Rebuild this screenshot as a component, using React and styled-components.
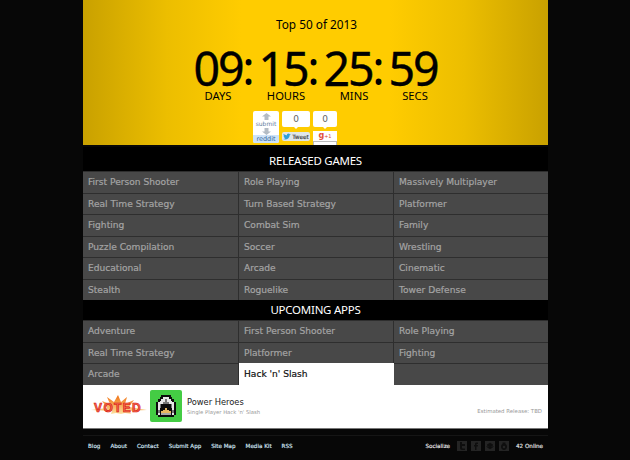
import styled, { createGlobalStyle } from "styled-components";

const releasedGames = [
  "First Person Shooter", "Role Playing", "Massively Multiplayer",
  "Real Time Strategy", "Turn Based Strategy", "Platformer",
  "Fighting", "Combat Sim", "Family",
  "Puzzle Compilation", "Soccer", "Wrestling",
  "Educational", "Arcade", "Cinematic",
  "Stealth", "Roguelike", "Tower Defense",
];

const upcomingApps = [
  "Adventure", "First Person Shooter", "Role Playing",
  "Real Time Strategy", "Platformer", "Fighting",
  "Arcade", "Hack 'n' Slash", "",
];

const countdown = [
  { value: "09", label: "DAYS" },
  { value: "15", label: "HOURS" },
  { value: "25", label: "MINS" },
  { value: "59", label: "SECS" },
];

const footerLinks = ["Blog", "About", "Contact", "Submit App", "Site Map", "Media Kit", "RSS"];

const sprite = [
  "...#####...",
  "..##www##..",
  ".##wwkww##.",
  ".#wwwkwww#.",
  "#wwwkkkwww#",
  "#wk#####kw#",
  "#wk#####kw#",
  "#w###o###w#",
  "#k##ooo##k#",
  "#k#ooooo#k#",
  "#w#aaaaa#w#",
  ".#########.",
];

const spriteColors = { "#": "#0c0c0c", w: "#e8e8e8", k: "#777", o: "#e8b860", a: "#a8a8a8" };

export default function App() {
  return (
    <>
      <GlobalStyle />
      <Page>
        <Hero>
          <HeroTitle>Top 50 of 2013</HeroTitle>
          <Clock>
            {countdown.map((unit, i) => (
              <ClockGroup key={unit.label}>
                <ClockDigits>{unit.value}</ClockDigits>
                {i < 3 && <Colon>:</Colon>}
              </ClockGroup>
            ))}
          </Clock>
          <ClockLabels>
            {countdown.map((unit) => (
              <ClockLabel key={unit.label}>{unit.label}</ClockLabel>
            ))}
          </ClockLabels>
          <ShareRow>
            <RedditBox>
              <Arrow>
                <svg width="9" height="7" viewBox="0 0 9 7"><path d="M4.500 0 9 3.500H6.500V7h-4V3.500H0z" fill="#b4bcc4" /></svg>
              </Arrow>
              <RedditSubmit>submit</RedditSubmit>
              <Arrow>
                <svg width="9" height="7" viewBox="0 0 9 7"><path d="M4.500 7 9 3.500H6.500V0h-4v3.500H0z" fill="#b4bcc4" /></svg>
              </Arrow>
              <RedditName>reddit</RedditName>
            </RedditBox>
            <TweetColumn>
              <Bubble>0</Bubble>
              <TweetButton>
                <svg width="8" height="7" viewBox="0 0 10 8"><path d="M0 7c3 1.500 8 .5 8.500-5L10 1 8.500 1.200C8 0 6 -.3 5.200 1 4.800 1.600 5 2 5 2.500 3.500 2.500 2 1.800 .8 .6 .3 1.800.8 2.800 1.500 3.300L.6 3.100C.7 4 1.300 4.700 2.200 5 1.900 5.100 1.500 5.100 1.200 5 1.500 5.700 2.200 6.200 3 6.200 2.200 6.800 1 7.100 0 7z" fill="#2c9fd8" /></svg>
                Tweet
              </TweetButton>
            </TweetColumn>
            <PlusColumn>
              <Bubble>0</Bubble>
              <PlusButton>
                <PlusG>g</PlusG>+1
              </PlusButton>
              <CutOffBox />
            </PlusColumn>
          </ShareRow>
        </Hero>

        <SectionTitle>RELEASED GAMES</SectionTitle>
        <CategoryGrid>
          {releasedGames.map((name) => (
            <Category key={name}>{name}</Category>
          ))}
        </CategoryGrid>

        <SectionTitle $compact>UPCOMING APPS</SectionTitle>
        <CategoryGrid>
          {upcomingApps.map((name, i) => (
            <Category key={i} $active={name === "Hack 'n' Slash"}>
              {name}
            </Category>
          ))}
        </CategoryGrid>

        <FeaturePanel>
          <VotedBadge>
            <svg width="56" height="22" viewBox="0 0 56 22">
              <defs>
                <linearGradient id="burst" x1="0" y1="0" x2="0" y2="1">
                  <stop offset="0" stopColor="#f07010" />
                  <stop offset="1" stopColor="#fce0a0" />
                </linearGradient>
              </defs>
              <path
                d="M27 0l3 7 6-5-2 7 9-4-5 7 18 3-17 1 1 3-6-1-4 1-5-1-5 1 1-3L0 15l16-2-5-7 8 3-3-7 7 5z"
                fill="url(#burst)"
              />
            </svg>
            <VotedText>VOTED</VotedText>
          </VotedBadge>
          <AppIcon>
            <svg width="20" height="22" viewBox="0 0 11 12" shapeRendering="crispEdges">
              {sprite.flatMap((line, y) =>
                [...line].map((c, x) =>
                  c === "." ? null : (
                    <rect key={`${x}-${y}`} x={x} y={y} width="1" height="1" fill={spriteColors[c]} />
                  )
                )
              )}
            </svg>
          </AppIcon>
          <AppInfo>
            <AppName>Power Heroes</AppName>
            <AppGenre>Single Player Hack 'n' Slash</AppGenre>
          </AppInfo>
          <ReleaseDate>Estimated Release: TBD</ReleaseDate>
        </FeaturePanel>

        <Footer>
          <FooterLinks>
            {footerLinks.map((link) => (
              <FooterLink key={link}>{link}</FooterLink>
            ))}
          </FooterLinks>
          <FooterRight>
            <FooterText>Socialize</FooterText>
            <SocialIcons>
              <SocialIcon>
                <svg width="10" height="10" viewBox="0 0 10 10"><path d="M3 1h2v2h3v2H5v1.500c0 .6.500 1 1 1h2V9H5C3.800 9 3 8.200 3 7z" fill="#0e0e0e" /></svg>
              </SocialIcon>
              <SocialIcon>
                <svg width="10" height="10" viewBox="0 0 10 10"><path d="M4 9V5.500H3V4h1V3c0-1 .600-1.500 1.500-1.500H7V3H6c-.3 0-.5.200-.5.500V4H7l-.2 1.500H5.500V9z" fill="#0e0e0e" /></svg>
              </SocialIcon>
              <SocialIcon>
                <svg width="10" height="10" viewBox="0 0 10 10"><path d="M5 2 8 4 5 6 2 4zM1.500 5.500 5 8l3.500-2.500" fill="#0e0e0e" stroke="#0e0e0e" strokeWidth=".6" /></svg>
              </SocialIcon>
              <SocialIcon>
                <svg width="10" height="10" viewBox="0 0 10 10"><path d="M3.500 1.500h3V3c1 .5 1.500 1.500 1.500 2.500C8 7.500 6.700 9 5 9S2 7.500 2 5.500C2 4.500 2.500 3.500 3.500 3z" fill="#0e0e0e" /><circle cx="5" cy="6" r="1.300" fill="#242424" /></svg>
              </SocialIcon>
            </SocialIcons>
            <OnlineCount>42 Online</OnlineCount>
          </FooterRight>
        </Footer>
      </Page>
    </>
  );
}

const GlobalStyle = createGlobalStyle`
  html, body {
    margin: 0;
    padding: 0;
    background: #070707;
    height: 100%;
    overflow: hidden;
  }
`;

const Page = styled.div`
  width: 465px;
  margin-left: 83px;
  font-family: "DejaVu Sans", sans-serif;
`;

const Hero = styled.div`
  height: 145px;
  overflow: hidden;
  display: flex;
  flex-direction: column;
  align-items: center;
  background: linear-gradient(90deg, #c9a100 0%, #ecbe00 18%, #ffcc00 34%, #ffcc00 66%, #ecbe00 82%, #c9a100 100%);
  font-family: "Noto Sans", sans-serif;
  color: #000;
`;

const HeroTitle = styled.div`
  margin-top: 15px;
  padding-left: 2px;
  font-size: 11.8px;
  line-height: 18px;
`;

const Clock = styled.div`
  display: flex;
  margin-top: 11px;
  margin-right: 4px;
  height: 45px;
`;

const ClockGroup = styled.div`
  display: flex;
`;

const ClockDigits = styled.div`
  width: 45px;
  text-align: center;
  font-size: 46.5px;
  line-height: 48px;
  letter-spacing: -2px;
  -webkit-text-stroke: 0.4px;
  white-space: nowrap;
`;

const Colon = styled.div`
  width: 20px;
  text-align: center;
  font-size: 46.5px;
  line-height: 46px;
`;

const ClockLabels = styled.div`
  display: grid;
  grid-template-columns: 68px 68px 68px 54px;
  margin-right: 5px;
`;

const ClockLabel = styled.div`
  text-align: center;
  font-size: 11.2px;
  line-height: 14px;
`;

const ShareRow = styled.div`
  display: flex;
  gap: 3px;
  margin-top: 8px;
  margin-left: 170px;
  align-self: flex-start;
  font-family: "DejaVu Sans", sans-serif;
`;

const RedditBox = styled.div`
  box-sizing: border-box;
  width: 26px;
  height: 32px;
  padding-top: 2px;
  overflow: hidden;
  background: #fff;
  border-radius: 2px;
  display: flex;
  flex-direction: column;
  align-items: center;
`;

const Arrow = styled.div`
  height: 7px;
  display: flex;
`;

const RedditSubmit = styled.div`
  font-size: 6px;
  line-height: 8px;
  color: #5f7d9d;
`;

const RedditName = styled.div`
  width: 100%;
  margin-top: auto;
  text-align: center;
  font-size: 6.5px;
  line-height: 8px;
  color: #369;
  background: #cee3f8;
`;

const TweetColumn = styled.div`
  width: 28px;
  display: flex;
  flex-direction: column;
  gap: 5px;
`;

const PlusColumn = styled(TweetColumn)`
  width: 24px;
  gap: 5px;
`;

const Bubble = styled.div`
  position: relative;
  height: 16px;
  background: #fff;
  border-radius: 2px;
  text-align: center;
  font-size: 9px;
  line-height: 16px;
  color: #666;
  &::after {
    content: "";
    position: absolute;
    left: 50%;
    bottom: -2px;
    margin-left: -2px;
    border-left: 2px solid transparent;
    border-right: 2px solid transparent;
    border-top: 2px solid #fff;
  }
`;

const TweetButton = styled.div`
  height: 9px;
  background: #dfe6ea;
  border-radius: 2px;
  display: flex;
  align-items: center;
  justify-content: center;
  gap: 1px;
  font-size: 5.8px;
  -webkit-text-stroke: 0.1px;
  color: #333;
`;

const PlusButton = styled.div`
  height: 10px;
  margin-top: -1px;
  background: #fff;
  text-align: center;
  font-size: 5px;
  line-height: 9px;
  color: #d8432f;
`;

const PlusG = styled.span`
  font-size: 8px;
  font-weight: 700;
  color: #e2503c;
`;

const CutOffBox = styled.div`
  height: 8px;
  margin-top: -5px;
  border: 1px solid #bbb;
  background: #fff;
`;

const SectionTitle = styled.div`
  height: ${(p) => (p.$compact ? "20px" : "24px")};
  margin-top: ${(p) => (p.$compact ? "0" : "2px")};
  background: #000;
  color: #fff;
  text-align: center;
  font-family: "Noto Sans", sans-serif;
  font-size: 11.5px;
  letter-spacing: -0.25px;
  line-height: ${(p) => (p.$compact ? "20px" : "28px")};
`;

const CategoryGrid = styled.div`
  display: grid;
  grid-template-columns: 156px 155px 154px;
`;

const Category = styled.div`
  height: 20.5px;
  padding-left: 5px;
  line-height: 21px;
  font-size: 9.1px;
  -webkit-text-stroke: 0.2px;
  color: ${(p) => (p.$active ? "#111" : "#a4a4a4")};
  background: ${(p) => (p.$active ? "#fff" : "#484848")};
  border-top: 1px solid ${(p) => (p.$active ? "#fff" : "#2e2e2e")};
  border-right: 1px solid ${(p) => (p.$active ? "#fff" : "#2e2e2e")};
  &:nth-child(3n) {
    border-right: none;
  }
`;

const FeaturePanel = styled.div`
  height: 43.5px;
  background: #fff;
  border-bottom: 1px solid #777;
  display: flex;
  align-items: center;
  position: relative;
`;

const VotedBadge = styled.div`
  position: relative;
  width: 56px;
  height: 22px;
  margin-left: 8px;
  display: flex;
`;

const VotedText = styled.div`
  position: absolute;
  left: 0;
  top: 6px;
  width: 54px;
  text-align: center;
  font-family: "Liberation Sans", sans-serif;
  font-size: 12px;
  line-height: 14px;
  font-weight: 700;
  letter-spacing: 1.3px;
  color: #f07050;
  -webkit-text-stroke: 0.6px #d80808;
`;

const AppIcon = styled.div`
  width: 32px;
  height: 32px;
  margin-left: 3px;
  background: #44cc44;
  border-radius: 2px;
  display: flex;
  align-items: center;
  justify-content: center;
`;

const AppInfo = styled.div`
  margin-left: 5px;
`;

const AppName = styled.div`
  font-size: 8.3px;
  line-height: 12px;
  color: #222;
`;

const AppGenre = styled.div`
  font-size: 5.3px;
  line-height: 9px;
  color: #999;
`;

const ReleaseDate = styled.div`
  position: absolute;
  right: 6px;
  top: 21px;
  font-size: 5.4px;
  line-height: 10px;
  color: #999;
`;

const Footer = styled.div`
  margin-top: 6px;
  border-top: 1px solid #151515;
  display: flex;
  justify-content: space-between;
  align-items: center;
  height: 20px;
`;

const FooterLinks = styled.div`
  display: flex;
  gap: 10px;
  padding-left: 5px;
`;

const FooterLink = styled.div`
  font-size: 5.6px;
  -webkit-text-stroke: 0.15px;
  color: #d6e8f7;
`;

const FooterRight = styled.div`
  display: flex;
  align-items: center;
  margin-right: 5px;
`;

const FooterText = styled.div`
  font-size: 5.6px;
  -webkit-text-stroke: 0.15px;
  color: #e8e8e8;
`;

const OnlineCount = styled(FooterText)`
  margin-left: 7px;
`;

const SocialIcons = styled.div`
  display: flex;
  gap: 4px;
  margin-left: 7px;
`;

const SocialIcon = styled.div`
  width: 10px;
  height: 10px;
  background: #242424;
  display: flex;
`;
